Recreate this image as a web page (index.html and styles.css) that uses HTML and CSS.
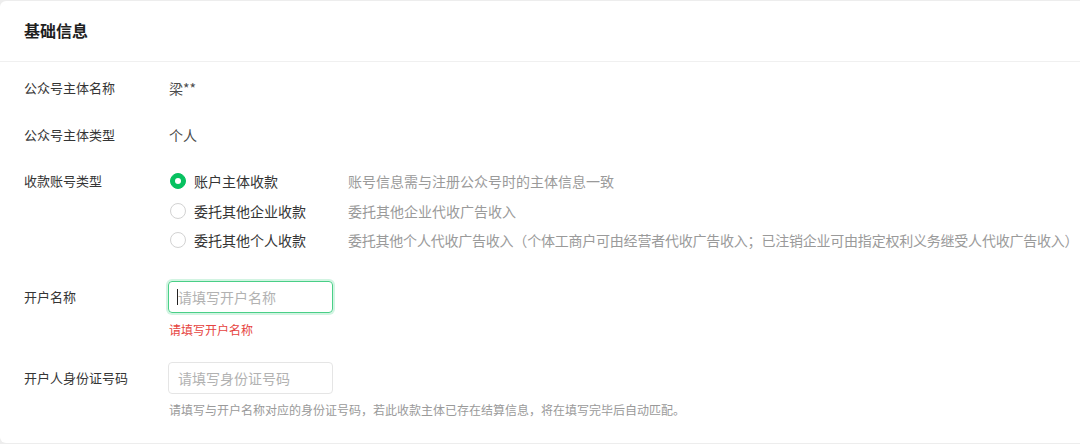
FILE: index.html
```html
<!DOCTYPE html>
<html lang="zh-CN">
<head>
<meta charset="utf-8">
<title>基础信息</title>
<link rel="stylesheet" href="styles.css">
</head>
<body>
<div class="card">
  <div class="card-hd">基础信息</div>
  <div class="card-bd">
    <div class="row row-first">
      <div class="label">公众号主体名称</div>
      <div class="value">梁**</div>
    </div>
    <div class="row row-gap">
      <div class="label">公众号主体类型</div>
      <div class="value">个人</div>
    </div>
    <div class="row row-gap2">
      <div class="label">收款账号类型</div>
      <div class="radios">
        <div class="radio-item">
          <div class="radio-main"><span class="radio checked"></span><span class="radio-text">账户主体收款</span></div>
          <div class="radio-desc">账号信息需与注册公众号时的主体信息一致</div>
        </div>
        <div class="radio-item">
          <div class="radio-main"><span class="radio"></span><span class="radio-text">委托其他企业收款</span></div>
          <div class="radio-desc">委托其他企业代收广告收入</div>
        </div>
        <div class="radio-item">
          <div class="radio-main"><span class="radio"></span><span class="radio-text">委托其他个人收款</span></div>
          <div class="radio-desc radio-desc-long">委托其他个人代收广告收入（个体工商户可由经营者代收广告收入；已注销企业可由指定权利义务继受人代收广告收入）</div>
        </div>
      </div>
    </div>
    <div class="row row-input row-input-first">
      <div class="label label-input">开户名称</div>
      <div class="field">
        <div class="input focus"><span class="caret"></span><span class="placeholder">请填写开户名称</span></div>
        <div class="error">请填写开户名称</div>
      </div>
    </div>
    <div class="row row-input row-input-second">
      <div class="label label-input">开户人身份证号码</div>
      <div class="field">
        <div class="input"><span class="placeholder">请填写身份证号码</span></div>
        <div class="hint">请填写与开户名称对应的身份证号码，若此收款主体已存在结算信息，将在填写完毕后自动匹配。</div>
      </div>
    </div>
  </div>
</div>
</body>
</html>
```

FILE: styles.css
```css
html, body {
  margin: 0;
  padding: 0;
}
body {
  background: #ededed;
  width: 1080px;
  height: 444px;
  overflow: hidden;
  font-family: "Noto Sans CJK SC", "Noto Sans", sans-serif;
  color: #353535;
}
.card {
  margin: 1px 0 0 0;
  width: 1080px;
  height: 442px;
  background: #ffffff;
  border-radius: 6px 0 0 6px;
  overflow: hidden;
}
.card-hd {
  height: 61px;
  box-sizing: border-box;
  padding: 19px 24px 0;
  font-size: 16px;
  line-height: 20px;
  font-weight: 700;
  color: #1f1f1f;
  border-bottom: 1px solid #f0f0f0;
}
.card-bd {
  padding: 0 0 0 24px;
}
.row {
  display: flex;
  align-items: flex-start;
  font-size: 14px;
  line-height: 20px;
}
.row-first { padding-top: 16px; }
.row-gap { margin-top: 27px; }
.row-gap2 { margin-top: 26px; }
.label {
  width: 145px;
  flex: none;
  color: #353535;
  font-size: 13px;
}
.value {
  color: #4c4c4c;
}
.radios {
  display: flex;
  flex-direction: column;
  gap: 9.5px;
}
.radio-item {
  display: flex;
  align-items: center;
  height: 20px;
}
.radio-main {
  width: 179px;
  flex: none;
  display: flex;
  align-items: center;
  gap: 8px;
}
.radio {
  width: 14px;
  height: 14px;
  border: 1px solid #d2d2d2;
  border-radius: 50%;
  box-sizing: content-box;
  flex: none;
  margin-left: 1px;
  display: flex;
  align-items: center;
  justify-content: center;
}
.radio.checked {
  background: #07c160;
  border-color: #07c160;
}
.radio.checked::after {
  content: "";
  width: 6px;
  height: 6px;
  border-radius: 50%;
  background: #ffffff;
}
.radio-text {
  color: #353535;
}
.radio-desc {
  color: #9a9a9a;
  white-space: nowrap;
}
.radio-desc-long {
  letter-spacing: -0.22px;
}
.row-input-first { margin-top: 31px; }
.row-input-second { margin-top: 24px; }
.label-input {
  height: 32px;
  line-height: 32px;
}
.field {
  display: flex;
  flex-direction: column;
}
.input {
  width: 165px;
  height: 32px;
  box-sizing: border-box;
  border: 1px solid #e5e5e5;
  border-radius: 4px;
  padding: 0 9px;
  display: flex;
  align-items: center;
  margin-left: -1px;
}
.input.focus {
  border-color: #49cf87;
  box-shadow: 0 0 0 2px rgba(7, 193, 96, 0.18);
  padding-left: 8px;
}
.caret {
  width: 1px;
  height: 16px;
  background: #222;
  flex: none;
}
.placeholder {
  color: #b2b2b2;
  font-size: 14px;
  line-height: 20px;
}
.error {
  margin-top: 9px;
  font-size: 12px;
  line-height: 16px;
  color: #e64340;
}
.hint {
  margin-top: 8px;
  font-size: 12px;
  line-height: 16px;
  color: #9a9a9a;
  white-space: nowrap;
}
```
